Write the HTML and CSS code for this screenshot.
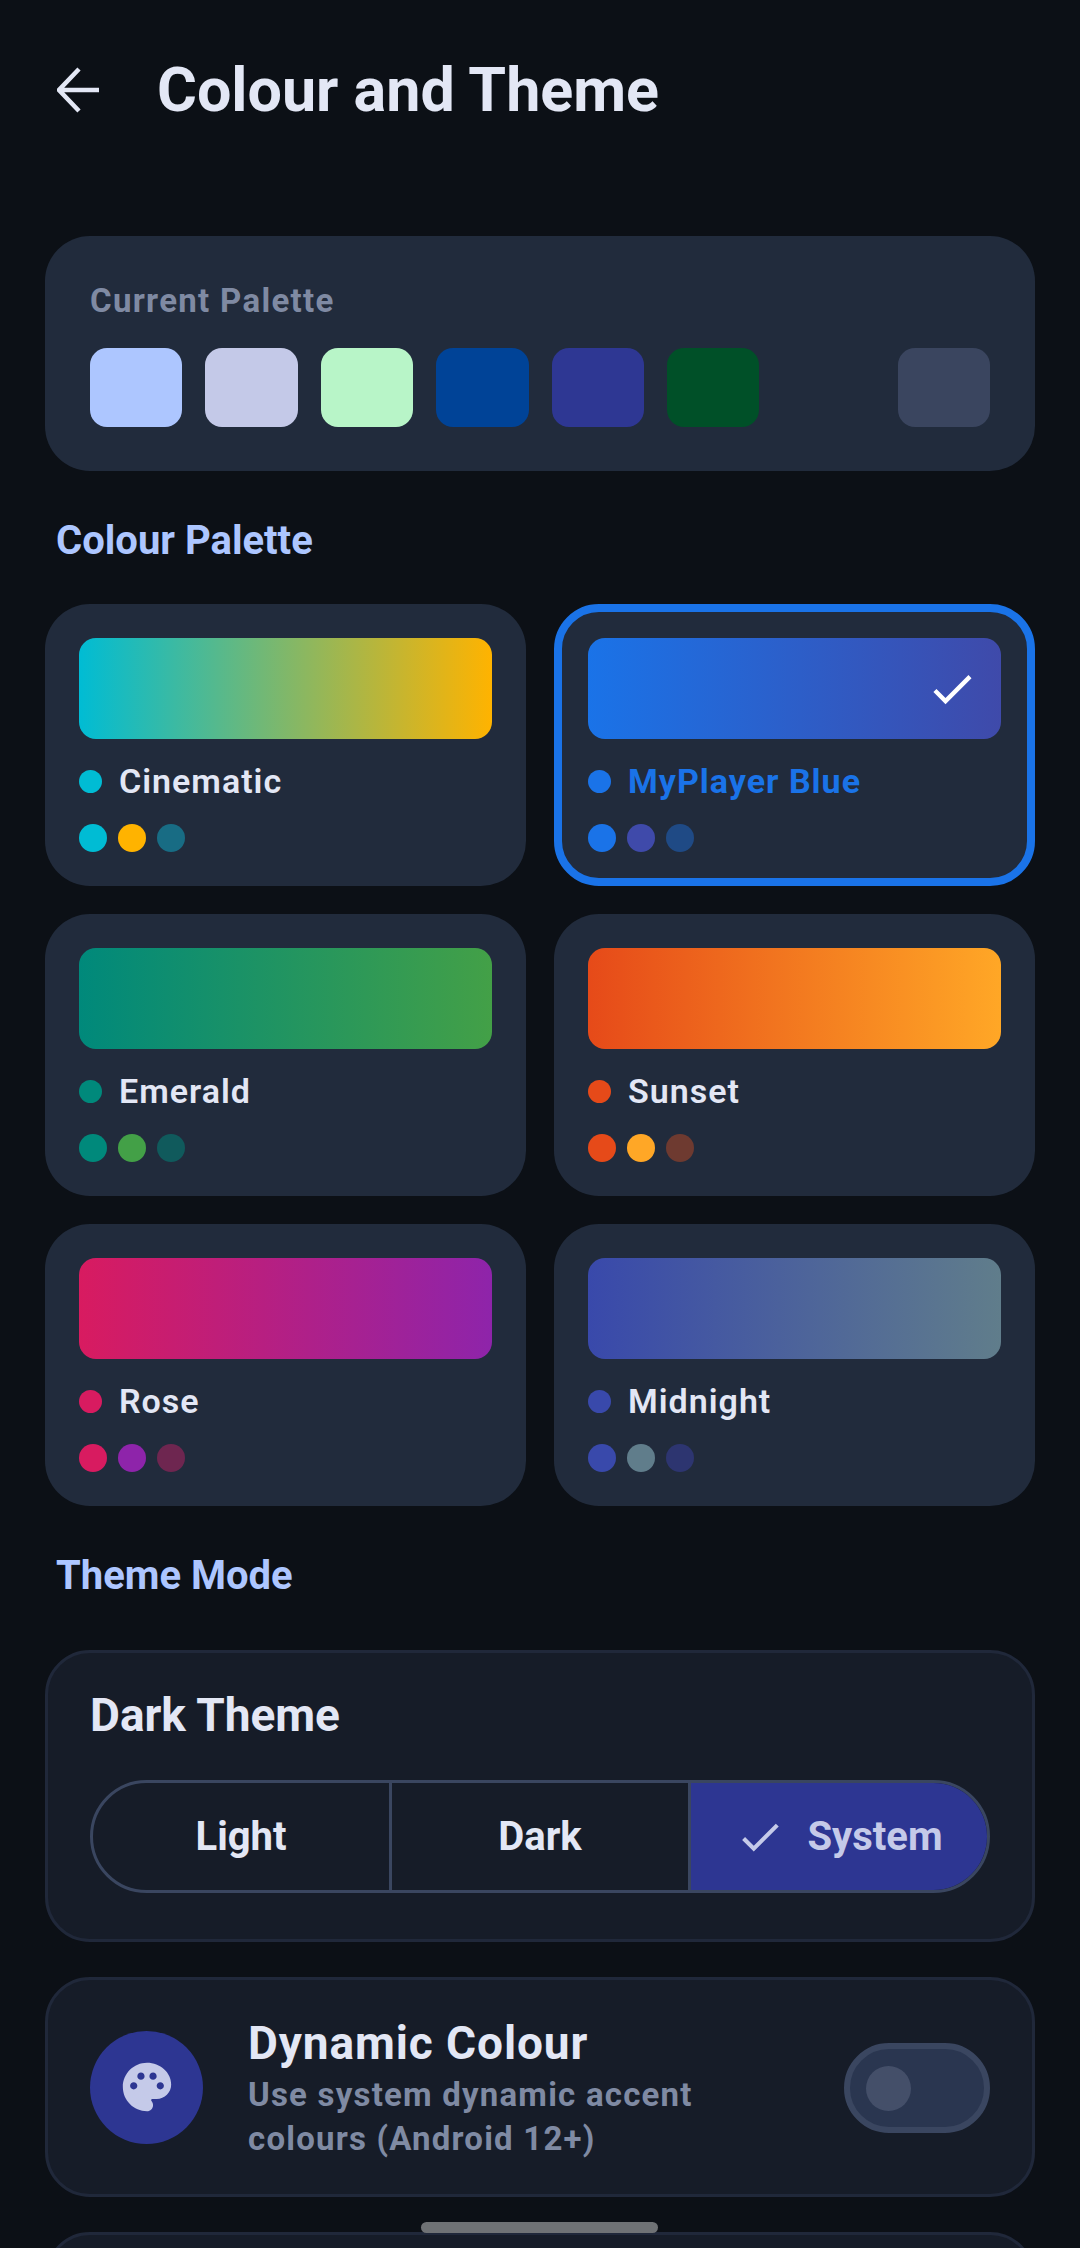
FILE: index.html
```html
<!DOCTYPE html>
<html lang="en">
<head>
    <meta charset="UTF-8">
    <meta name="viewport" content="width=device-width, initial-scale=1.0">
    <title>Colour and Theme</title>
    <link rel="stylesheet" href="styles.css">
</head>
<body>
    <div class="top-bar">
        <svg class="back-icon" viewBox="0 0 44 46"><path d="M42 23H3M22 2L2 23l20 21"/></svg>
        <h1>Colour and Theme</h1>
    </div>

    <div class="content">
        <!-- Current palette -->
        <div class="current-card">
            <div class="current-label">Current Palette</div>
            <div class="swatches">
                <div class="swatch sw-primary"></div>
                <div class="swatch sw-secondary"></div>
                <div class="swatch sw-tertiary"></div>
                <div class="swatch sw-primary-c"></div>
                <div class="swatch sw-secondary-c"></div>
                <div class="swatch sw-tertiary-c"></div>
                <div class="swatch sw-outline"></div>
            </div>
        </div>

        <!-- Palette grid -->
        <div class="section-label">Colour Palette</div>
        <div class="palette-grid">
            <div class="palette-card cinematic">
                <div class="gradient"></div>
                <div class="name-row"><span class="dot"></span><span class="name">Cinematic</span></div>
                <div class="mini-dots"><span></span><span></span><span></span></div>
            </div>
            <div class="palette-card blue selected">
                <div class="gradient">
                    <svg class="check-icon" viewBox="0 0 24 24"><path d="M9 16.17L4.83 12l-1.41 1.41L9 19 21 7l-1.41-1.41z"/></svg>
                </div>
                <div class="name-row"><span class="dot"></span><span class="name">MyPlayer Blue</span></div>
                <div class="mini-dots"><span></span><span></span><span></span></div>
            </div>
            <div class="palette-card emerald">
                <div class="gradient"></div>
                <div class="name-row"><span class="dot"></span><span class="name">Emerald</span></div>
                <div class="mini-dots"><span></span><span></span><span></span></div>
            </div>
            <div class="palette-card sunset">
                <div class="gradient"></div>
                <div class="name-row"><span class="dot"></span><span class="name">Sunset</span></div>
                <div class="mini-dots"><span></span><span></span><span></span></div>
            </div>
            <div class="palette-card rose">
                <div class="gradient"></div>
                <div class="name-row"><span class="dot"></span><span class="name">Rose</span></div>
                <div class="mini-dots"><span></span><span></span><span></span></div>
            </div>
            <div class="palette-card midnight">
                <div class="gradient"></div>
                <div class="name-row"><span class="dot"></span><span class="name">Midnight</span></div>
                <div class="mini-dots"><span></span><span></span><span></span></div>
            </div>
        </div>

        <!-- Theme mode -->
        <div class="section-label theme-label">Theme Mode</div>
        <div class="setting-card dark-theme">
            <div class="setting-title">Dark Theme</div>
            <div class="segments">
                <div class="segment">Light</div>
                <div class="segment">Dark</div>
                <div class="segment active">
                    <svg class="segment-check" viewBox="0 0 24 24"><path d="M9 16.17L4.83 12l-1.41 1.41L9 19 21 7l-1.41-1.41z"/></svg>
                    System
                </div>
            </div>
        </div>

        <div class="setting-card dynamic">
            <div class="icon-circle">
                <svg class="palette-icon" viewBox="0 0 24 24"><path d="M12 2C6.49 2 2 6.49 2 12s4.49 10 10 10c1.38 0 2.5-1.12 2.5-2.5 0-.61-.23-1.2-.64-1.67-.08-.1-.13-.21-.13-.33 0-.28.22-.5.5-.5H16c3.31 0 6-2.69 6-6 0-4.96-4.49-9-10-9zm5.5 11c-.83 0-1.5-.67-1.5-1.5s.67-1.5 1.5-1.5 1.5.67 1.5 1.5-.67 1.5-1.5 1.5zm-3-4c-.83 0-1.5-.67-1.5-1.5S13.67 6 14.5 6s1.5.67 1.5 1.5S15.33 9 14.5 9zM5 11.5c0-.83.67-1.5 1.5-1.5s1.5.67 1.5 1.5S7.33 13 6.5 13 5 12.33 5 11.5zm6-4c0 .83-.67 1.5-1.5 1.5S8 8.33 8 7.5 8.67 6 9.5 6s1.5.67 1.5 1.5z"/></svg>
            </div>
            <div class="dynamic-text">
                <div class="setting-title">Dynamic Colour</div>
                <div class="setting-desc">Use system dynamic accent colours (Android 12+)</div>
            </div>
            <div class="toggle"><span class="thumb"></span></div>
        </div>

        <div class="setting-card next-card"></div>
    </div>

    <div class="nav-handle"></div>
</body>
</html>
```

FILE: styles.css
```css
* {
    box-sizing: border-box;
}

html, body {
    margin: 0;
    height: 2248px;
    overflow: hidden;
}

body {
    position: relative;
    background: #0c1016;
    font-family: Roboto, "Liberation Sans", sans-serif;
    color: #e3e7f5;
}

.top-bar {
    display: flex;
    align-items: center;
    height: 180px;
    padding-left: 57px;
}

.back-icon {
    width: 44px;
    height: 46px;
    margin-right: 56px;
    fill: none;
    stroke: #e3e7f5;
    stroke-width: 4.5;
}

h1 {
    margin: 0;
    font-size: 61px;
    font-weight: 700;
    color: #e3e7f5;
}

.content {
    padding: 56px 45px 0;
}

/* Current palette */
.current-card {
    height: 235px;
    padding: 44px 45px;
    background: #212b3c;
    border-radius: 45px;
}

.current-label {
    height: 40px;
    line-height: 42px;
    font-size: 33px;
    font-weight: 700;
    letter-spacing: 1.3px;
    color: #7f8aa3;
}

.swatches {
    display: grid;
    grid-template-columns: repeat(8, 1fr);
    gap: 23px;
    margin-top: 28px;
}

.swatch {
    height: 79px;
    border-radius: 17px;
}

.sw-primary { background: #adc6ff; }
.sw-secondary { background: #c4c9e8; }
.sw-tertiary { background: #b8f5c8; }
.sw-primary-c { background: #004397; }
.sw-secondary-c { background: #2e3793; }
.sw-tertiary-c { background: #005028; }
.sw-outline { background: #3a455f; grid-column: 8; }

.section-label {
    height: 40px;
    margin: 49px 0 44px 11px;
    line-height: 42px;
    font-size: 40px;
    font-weight: 700;
    color: #adc6ff;
}

.theme-label {
    margin-bottom: 55px;
}

/* Palette grid */
.palette-grid {
    display: grid;
    grid-template-columns: 481px 481px;
    gap: 28px;
}

.palette-card {
    height: 282px;
    padding: 26px;
    background: #212b3c;
    border: 8px solid transparent;
    border-radius: 45px;
}

.palette-card.selected {
    border-color: #1a73e8;
}

.gradient {
    display: flex;
    align-items: center;
    justify-content: flex-end;
    height: 101px;
    padding-right: 23px;
    border-radius: 17px;
}

.check-icon {
    width: 52px;
    height: 52px;
    fill: #fff;
}

.name-row {
    display: flex;
    align-items: center;
    height: 40px;
    margin-top: 22px;
}

.dot {
    width: 23px;
    height: 23px;
    margin-right: 17px;
    border-radius: 50%;
}

.name {
    font-size: 34px;
    font-weight: 600;
    letter-spacing: 1px;
}

.selected .name {
    font-weight: 700;
    color: #1a73e8;
}

.mini-dots {
    display: flex;
    gap: 11px;
    margin-top: 23px;
}

.mini-dots span {
    width: 28px;
    height: 28px;
    border-radius: 50%;
}

.cinematic .gradient { background: linear-gradient(90deg, #00bcd4, #ffb300); }
.cinematic .dot, .cinematic .mini-dots span:nth-child(1) { background: #00bcd4; }
.cinematic .mini-dots span:nth-child(2) { background: #ffb300; }
.cinematic .mini-dots span:nth-child(3) { background: #186c84; }

.blue .gradient { background: linear-gradient(90deg, #1a73e8, #3f4aaa); }
.blue .dot, .blue .mini-dots span:nth-child(1) { background: #1a73e8; }
.blue .mini-dots span:nth-child(2) { background: #3f4aaa; }
.blue .mini-dots span:nth-child(3) { background: #1f4a85; }

.emerald .gradient { background: linear-gradient(90deg, #00897b, #43a047); }
.emerald .dot, .emerald .mini-dots span:nth-child(1) { background: #00897b; }
.emerald .mini-dots span:nth-child(2) { background: #43a047; }
.emerald .mini-dots span:nth-child(3) { background: #105a5c; }

.sunset .gradient { background: linear-gradient(90deg, #e64a19, #ffa726); }
.sunset .dot, .sunset .mini-dots span:nth-child(1) { background: #e64a19; }
.sunset .mini-dots span:nth-child(2) { background: #ffa726; }
.sunset .mini-dots span:nth-child(3) { background: #6e3a30; }

.rose .gradient { background: linear-gradient(90deg, #d81b60, #8e24aa); }
.rose .dot, .rose .mini-dots span:nth-child(1) { background: #d81b60; }
.rose .mini-dots span:nth-child(2) { background: #8e24aa; }
.rose .mini-dots span:nth-child(3) { background: #6e2650; }

.midnight .gradient { background: linear-gradient(90deg, #3949ab, #607d8b); }
.midnight .dot, .midnight .mini-dots span:nth-child(1) { background: #3949ab; }
.midnight .mini-dots span:nth-child(2) { background: #607d8b; }
.midnight .mini-dots span:nth-child(3) { background: #2d3570; }

/* Settings cards */
.setting-card {
    background: #161c28;
    border: 3px solid #20283a;
    border-radius: 45px;
}

.dark-theme {
    height: 292px;
    padding: 40px 42px 0;
}

.setting-title {
    height: 44px;
    line-height: 44px;
    font-size: 46px;
    font-weight: 700;
    color: #e3e7f5;
}

.segments {
    display: flex;
    height: 113px;
    margin-top: 43px;
    overflow: hidden;
    border: 3px solid #3a4660;
    border-radius: 57px;
}

.segment {
    display: flex;
    flex: 1;
    align-items: center;
    justify-content: center;
    font-size: 40px;
    font-weight: 700;
    color: #e3e7f5;
}

.segment + .segment {
    border-left: 3px solid #3a4660;
}

.segment.active {
    background: #2d3692;
    color: #c5cae9;
}

.segment-check {
    width: 50px;
    height: 50px;
    margin-right: 22px;
    fill: #c5cae9;
}

.dynamic {
    display: flex;
    align-items: center;
    height: 220px;
    margin-top: 35px;
    padding: 0 42px;
}

.icon-circle {
    display: flex;
    flex-shrink: 0;
    align-items: center;
    justify-content: center;
    width: 113px;
    height: 113px;
    margin-right: 45px;
    background: #2d3692;
    border-radius: 50%;
}

.palette-icon {
    width: 58px;
    height: 58px;
    fill: #c5cae9;
}

.dynamic-text {
    width: 490px;
    padding-top: 8px;
}

.dynamic .setting-title {
    letter-spacing: 0.9px;
}

.setting-desc {
    margin-top: 8px;
    line-height: 44px;
    font-size: 33px;
    font-weight: 700;
    letter-spacing: 1.2px;
    color: #7f8aa3;
}

.toggle {
    display: flex;
    align-items: center;
    width: 146px;
    height: 90px;
    margin-top: 2px;
    margin-left: auto;
    padding-left: 16px;
    background: #2a3650;
    border: 6px solid #3a4660;
    border-radius: 45px;
}

.thumb {
    width: 45px;
    height: 45px;
    background: #444f69;
    border-radius: 50%;
}

.next-card {
    height: 120px;
    margin-top: 35px;
}

.nav-handle {
    position: absolute;
    left: 421px;
    top: 2222px;
    width: 237px;
    height: 11px;
    background: #6f7275;
    border-radius: 6px;
}
```
